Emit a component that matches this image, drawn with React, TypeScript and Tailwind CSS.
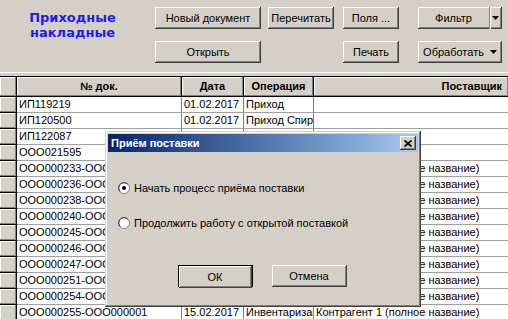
import React from "react";

const raised =
  "shadow-[inset_-1px_-1px_0_#404040,inset_1px_1px_0_#ffffff,inset_-2px_-2px_0_#808080]";

function Btn({ children, className = "" }: { children: React.ReactNode; className?: string }) {
  return (
    <div
      className={`flex items-center justify-center h-[22px] bg-[#d4d0c8] text-[11px] leading-[13px] text-black whitespace-nowrap shadow-[inset_-1px_-1px_0_#404040,inset_1px_1px_0_#ffffff,inset_-2px_-2px_0_#808080] ${className}`}
    >
      {children}
    </div>
  );
}

function Arrow() {
  return (
    <svg width="7" height="4" viewBox="0 0 7 4">
      <polygon points="0,0 7,0 3.5,4" fill="#000" />
    </svg>
  );
}

function Radio({ checked }: { checked?: boolean }) {
  return (
    <svg width="12" height="12" viewBox="0 0 12 12" className="shrink-0">
      <circle cx="6" cy="6" r="5.5" fill="#ffffff" stroke="#808080" />
      <path d="M2.3 9.7 A5 5 0 0 1 9.7 2.3" stroke="#404040" fill="none" />
      {checked && <circle cx="6" cy="6" r="2" fill="#000" />}
    </svg>
  );
}

type Row = { doc: string; date: string; op: string; sup: string };

const full = "Контрагент 1 (полное название)";
const rows: Row[] = [
  { doc: "ИП119219", date: "01.02.2017", op: "Приход", sup: "" },
  { doc: "ИП120500", date: "01.02.2017", op: "Приход Спиртное", sup: "" },
  { doc: "ИП122087", date: "01.02.2017", op: "Приход", sup: "" },
  { doc: "ООО021595", date: "01.02.2017", op: "Приход", sup: "" },
  { doc: "ООО000233-ООО000001", date: "02.02.2017", op: "Инвентаризация", sup: full },
  { doc: "ООО000236-ООО000001", date: "03.02.2017", op: "Инвентаризация", sup: full },
  { doc: "ООО000238-ООО000001", date: "06.02.2017", op: "Инвентаризация", sup: full },
  { doc: "ООО000240-ООО000001", date: "07.02.2017", op: "Инвентаризация", sup: full },
  { doc: "ООО000245-ООО000001", date: "08.02.2017", op: "Инвентаризация", sup: full },
  { doc: "ООО000246-ООО000001", date: "09.02.2017", op: "Инвентаризация", sup: full },
  { doc: "ООО000247-ООО000001", date: "10.02.2017", op: "Инвентаризация", sup: full },
  { doc: "ООО000251-ООО000001", date: "13.02.2017", op: "Инвентаризация", sup: full },
  { doc: "ООО000254-ООО000001", date: "14.02.2017", op: "Инвентаризация", sup: full },
  { doc: "ООО000255-ООО000001", date: "15.02.2017", op: "Инвентаризация", sup: full },
];

const hdr =
  "h-[19px] flex items-center justify-center bg-[#d4d0c8] border-r border-black font-bold text-[11px] shadow-[inset_-1px_-1px_0_#808080,inset_1px_1px_0_#ffffff] overflow-hidden whitespace-nowrap";
const cell =
  "h-[16px] flex items-center pl-[2px] bg-white border-r border-b border-r-[#808080] border-b-[#a0a0a0] text-[11px] leading-[15px] overflow-hidden whitespace-nowrap";

export default function App() {
  return (
    <div className="relative w-[508px] h-[319px] overflow-hidden bg-[#d4d0c8] font-['Liberation_Sans',Arial,sans-serif] text-black">
      {/* toolbar */}
      <div className="flex h-[72px]">
        <div className="w-[145px] pt-[10px] text-center font-['DejaVu_Sans',sans-serif] font-bold text-[13px] leading-[15px] text-[#1c1cf0]">
          Приходные
          <br />
          накладные
        </div>
        <div className="ml-[10px] flex flex-col pt-[7px] gap-[12px]">
          <div className="flex">
            <Btn className="w-[106px]">Новый документ</Btn>
            <Btn className="ml-[7px] w-[66px]">Перечитать</Btn>
            <Btn className="ml-[9px] w-[56px]">Поля ...</Btn>
            <div className={`ml-[19px] w-[84px] h-[22px] flex bg-[#d4d0c8] ${raised}`}>
              <div className="w-[72px] flex items-center justify-center text-[11px] border-r border-r-[#808080]">
                Фильтр
              </div>
              <div className="flex-1 flex items-center justify-center border-l border-l-white pr-[2px]">
                <Arrow />
              </div>
            </div>
          </div>
          <div className="flex">
            <Btn className="w-[106px]">Открыть</Btn>
            <Btn className="ml-[82px] w-[56px]">Печать</Btn>
            <Btn className="ml-[19px] w-[84px] gap-[6px]">
              <span>Обработать</span>
              <Arrow />
            </Btn>
          </div>
        </div>
      </div>
      <div className="h-[1px] bg-white" />
      <div className="h-[3px]" />
      {/* table */}
      <div className="border-t border-black">
        <div className="flex border-b border-black">
          <div className={`${hdr} w-[17px]`} />
          <div className={`${hdr} w-[165px]`}>№ док.</div>
          <div className={`${hdr} w-[62px]`}>Дата</div>
          <div className={`${hdr} w-[70px]`}>Операция</div>
          <div className={`${hdr} flex-1 justify-end pr-[6px] border-r-0`}>Поставщик</div>
        </div>
        {rows.map((r, i) => (
          <div key={i} className="flex">
            <div className="w-[17px] h-[16px] bg-[#d4d0c8] border-r border-b border-black shadow-[inset_-1px_-1px_0_#808080,inset_1px_1px_0_#ffffff]" />
            <div className={`${cell} w-[165px]`}>{r.doc}</div>
            <div className={`${cell} w-[62px]`}>{r.date}</div>
            <div className={`${cell} w-[70px]`}>{r.op}</div>
            <div className={`${cell} flex-1 border-r-0`}>{r.sup}</div>
          </div>
        ))}
      </div>

      {/* dialog */}
      <div className="absolute left-[105px] top-[131px] w-[316px] h-[176px] bg-[#d4d0c8] p-[3px] flex flex-col shadow-[inset_-1px_-1px_0_#404040,inset_1px_1px_0_#d4d0c8,inset_-2px_-2px_0_#808080,inset_2px_2px_0_#ffffff]">
        <div className="h-[18px] flex items-center pl-[3px] pr-[2px] bg-gradient-to-r from-[#0a246a] to-[#a6caf0]">
          <span className="text-white font-bold text-[11px] leading-[13px]">Приём поставки</span>
          <div className="ml-auto w-[16px] h-[14px] flex items-center justify-center bg-[#d4d0c8] shadow-[inset_-1px_-1px_0_#404040,inset_1px_1px_0_#ffffff,inset_-2px_-2px_0_#808080]">
            <svg width="8" height="7" viewBox="0 0 8 7">
              <path d="M0.5 0.5 L7.5 6.5 M7.5 0.5 L0.5 6.5" stroke="#000" strokeWidth="1.8" />
            </svg>
          </div>
        </div>
        <div className="flex flex-col pl-[10px] text-[11px] leading-[12px]">
          <div className="mt-[30px] flex items-center gap-[4px] h-[12px]">
            <Radio checked />
            <span>Начать процесс приёма поставки</span>
          </div>
          <div className="mt-[23px] flex items-center gap-[4px] h-[12px]">
            <Radio />
            <span>Продолжить работу с открытой поставкой</span>
          </div>
        </div>
        <div className="mt-[36px] flex justify-center gap-[19px] pr-[2px]">
          <div className="w-[75px] h-[22px] border border-black">
            <Btn className="w-full h-[20px]">ОК</Btn>
          </div>
          <Btn className="w-[75px]">Отмена</Btn>
        </div>
      </div>
    </div>
  );
}
